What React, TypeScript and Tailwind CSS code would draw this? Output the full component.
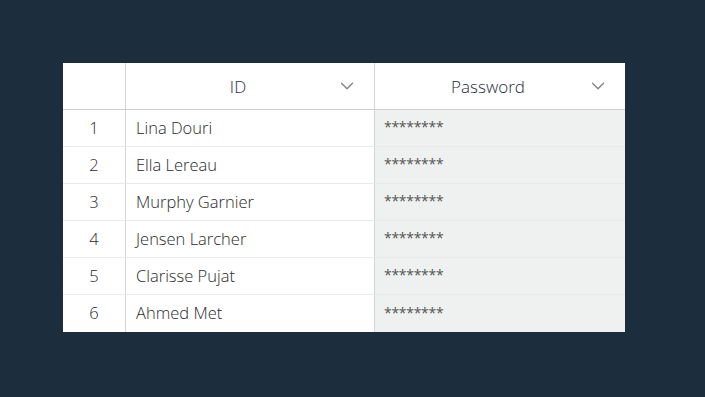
import { ChevronDown } from "lucide-react";

const rows = [
  { n: 1, name: "Lina Douri" },
  { n: 2, name: "Ella Lereau" },
  { n: 3, name: "Murphy Garnier" },
  { n: 4, name: "Jensen Larcher" },
  { n: 5, name: "Clarisse Pujat" },
  { n: 6, name: "Ahmed Met" },
];

function HeaderCell({ label, last }: { label: string; last?: boolean }) {
  return (
    <div
      className={`relative flex h-[46px] items-center justify-center pr-6 pt-[1px] text-[17px] font-light text-[#1f2d3b] ${
        last ? "" : "border-r border-[#d4d4d4]"
      }`}
    >
      {label}
      <ChevronDown className="absolute right-[16px] top-[12px] h-[22px] w-[22px] text-[#808080]" strokeWidth={1.4} />
    </div>
  );
}

export default function App() {
  return (
    <div className="flex h-[397px] w-[705px] items-start bg-[#1c2d3d] pl-[63px] pt-[63px] font-['Open_Sans',sans-serif]">
      <div className="w-[562px] bg-white">
        <div className="grid grid-cols-[63px_249px_250px] border-b border-[#d0d0d0]">
          <div className="h-[46px] border-r border-[#d4d4d4]" />
          <HeaderCell label="ID" />
          <HeaderCell label="Password" last />
        </div>
        {rows.map((row, i) => (
          <div
            key={row.n}
            className={`grid h-[37px] grid-cols-[63px_249px_250px] ${
              i < rows.length - 1 ? "border-b border-[#e9e9e9]" : ""
            }`}
          >
            <div className="flex items-center justify-center border-r border-[#d4d4d4] text-[16.5px] font-light text-[#2a2a2a]">
              {row.n}
            </div>
            <div className="flex items-center border-r border-[#d4d4d4] pl-[10px] text-[16.5px] font-light text-[#2a2a2a]">
              {row.name}
            </div>
            <div className="flex items-center bg-[#eff1f0] pl-[9px] pb-[3px] text-[14px] tracking-[-0.3px] text-[#555]">
              ********
            </div>
          </div>
        ))}
      </div>
    </div>
  );
}
